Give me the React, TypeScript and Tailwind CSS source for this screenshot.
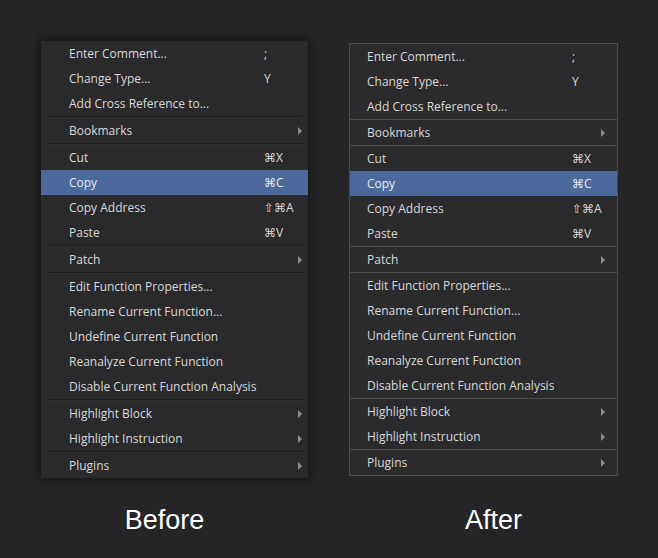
import React from "react";

type Item =
  | { type: "item"; label: string; shortcut?: string; sub?: boolean; active?: boolean }
  | { type: "sep" };

const items: Item[] = [
  { type: "item", label: "Enter Comment...", shortcut: ";" },
  { type: "item", label: "Change Type...", shortcut: "Y" },
  { type: "item", label: "Add Cross Reference to..." },
  { type: "sep" },
  { type: "item", label: "Bookmarks", sub: true },
  { type: "sep" },
  { type: "item", label: "Cut", shortcut: "⌘X" },
  { type: "item", label: "Copy", shortcut: "⌘C", active: true },
  { type: "item", label: "Copy Address", shortcut: "⇧⌘A" },
  { type: "item", label: "Paste", shortcut: "⌘V" },
  { type: "sep" },
  { type: "item", label: "Patch", sub: true },
  { type: "sep" },
  { type: "item", label: "Edit Function Properties..." },
  { type: "item", label: "Rename Current Function..." },
  { type: "item", label: "Undefine Current Function" },
  { type: "item", label: "Reanalyze Current Function" },
  { type: "item", label: "Disable Current Function Analysis" },
  { type: "sep" },
  { type: "item", label: "Highlight Block", sub: true },
  { type: "item", label: "Highlight Instruction", sub: true },
  { type: "sep" },
  { type: "item", label: "Plugins", sub: true },
];

function Arrow() {
  return (
    <svg width="4" height="8" viewBox="0 0 4 8" className="shrink-0">
      <path d="M0 0 L4 4 L0 8 Z" fill="#8c8c8e" />
    </svg>
  );
}

function Menu({ after }: { after: boolean }) {
  return (
    <div
      className={
        after
          ? "w-[269px] bg-[#2b2b2d] border border-[#4c4c4e]"
          : "w-[267px] bg-[#2a2a2c] shadow-[0_0_8px_2px_rgba(0,0,0,0.45)]"
      }
    >
      {items.map((it, i) => {
        if (it.type === "sep") {
          return after ? (
            <div key={i} className="h-px bg-[#4a4a4c]" />
          ) : (
            <div key={i} className="ml-[7px] mr-[5px] h-[2px] border-t border-[#1d1d1f] border-b border-b-[#303032]" />
          );
        }
        return (
          <div
            key={i}
            className={
              "flex h-[25px] items-center text-[12px] text-[#d9d9d9] " +
              (it.active ? "bg-[#4b6a9b] text-[#e8ecf2] " : "") +
              (after ? "pl-[17px] pr-[12px]" : "pl-[28px] pr-[6px]")
            }
          >
            <span className={after ? "w-[205px] shrink-0 whitespace-nowrap" : "w-[195px] shrink-0 whitespace-nowrap"}>
              {it.label}
            </span>
            {it.shortcut && <span className="whitespace-nowrap">{it.shortcut}</span>}
            {it.sub && (
              <span className="ml-auto flex items-center">
                <Arrow />
              </span>
            )}
          </div>
        );
      })}
    </div>
  );
}

export default function App() {
  return (
    <div
      className="h-[558px] w-[658px] bg-[#252527] grid grid-cols-2"
      style={{ fontFamily: '"Open Sans", "DejaVu Sans", sans-serif' }}
    >
      <div className="flex flex-col">
        <div className="pt-[41px] pl-[41px]">
          <Menu after={false} />
        </div>
        <div
          className="mt-[26px] h-[32px] text-center text-[27px] leading-[32px] text-white"
          style={{ fontFamily: '"Liberation Sans", Arial, sans-serif' }}
        >
          Before
        </div>
      </div>
      <div className="flex flex-col">
        <div className="pt-[43px] pl-[20px]">
          <Menu after={true} />
        </div>
        <div
          className="mt-[28px] h-[32px] text-center text-[27px] leading-[32px] text-white"
          style={{ fontFamily: '"Liberation Sans", Arial, sans-serif' }}
        >
          After
        </div>
      </div>
    </div>
  );
}
